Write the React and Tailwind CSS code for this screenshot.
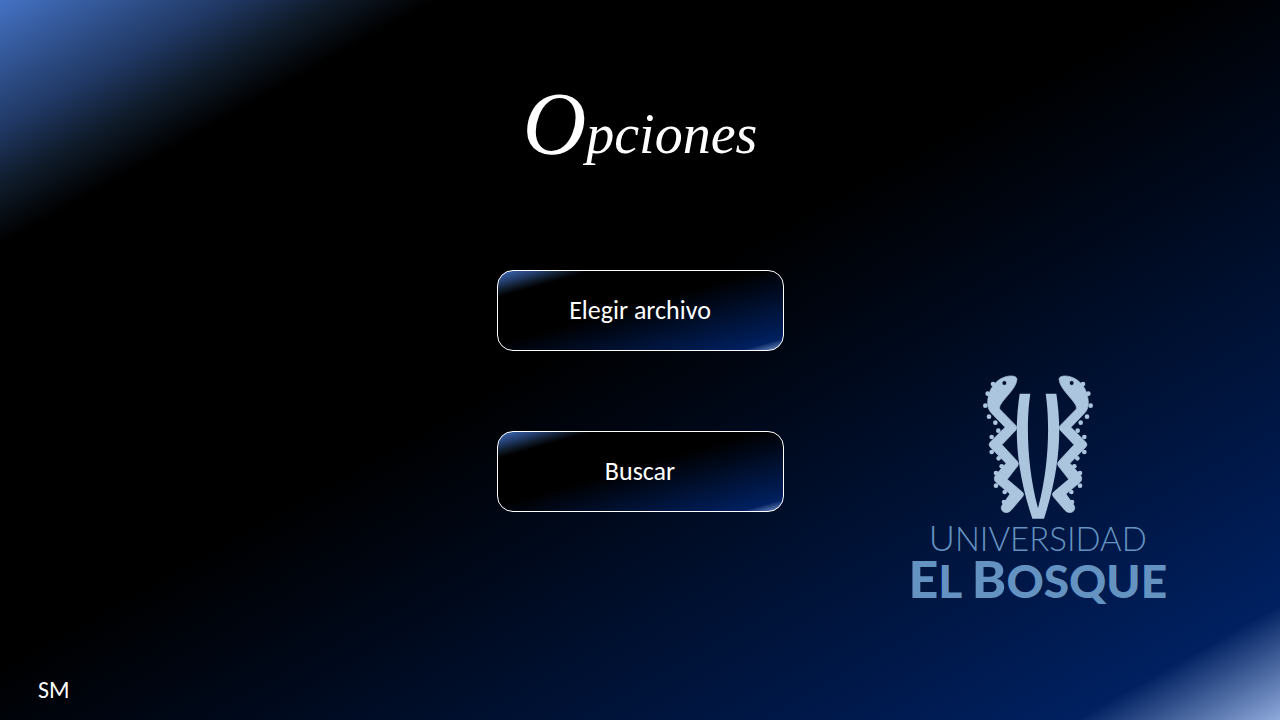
const gradient =
  "bg-[linear-gradient(to_bottom_right,#4472c4_0%,#203864_9%,#0f1b2a_13%,#000000_17%,#000000_46%,#002060_92%,#8faadc_100%)]";

const scales = [
  [99, 57], [83, 86], [76, 122], [87, 155], [106, 173], [115, 197], [95, 216],
  [95, 261], [116, 280], [125, 304], [108, 324], [108, 362], [134, 381], [132, 411],
];

function Serpent() {
  return (
    <>
      <path
        className="stroke-[#abc5de] stroke-2"
        fillRule="evenodd"
        d="M171 43C171 30 143 29 121 42C96 57 82 86 83 117C84 131 88 138 96 146L135 187L91 231Q83 239 91 247L138 295L107 330Q98 342 108 352L150 387L128 418C117 432 129 446 144 442Q150 440 154 435L188 395Q194 387 187 381L142 343L173 303Q178 296 172 289L126 239L168 195Q173 188 168 182L119 132Q118 125 121 120C134 97 168 72 171 43ZM140 54A7 7 0 1 0 126 54A7 7 0 1 0 140 54Z"
      />
      {scales.map(([x, y]) => (
        <circle key={`${x}-${y}`} cx={x} cy={y} r="7" />
      ))}
    </>
  );
}

function Emblem() {
  return (
    <svg viewBox="66 27 336 438" className="h-[146px] w-28 fill-[#abc5de]" aria-hidden="true">
      <Serpent />
      <g transform="translate(468 0) scale(-1 1)">
        <Serpent />
      </g>
      <path d="M179 86H211C199 165 199 300 234 430C269 300 269 165 257 86H289C304 185 304 300 252 461H217C164 300 164 185 179 86Z" />
    </svg>
  );
}

function OptionButton({ children }) {
  return (
    <button
      type="button"
      className={`h-[81px] w-full cursor-pointer rounded-2xl border border-white bg-origin-border text-[26px] ${gradient}`}
    >
      {children}
    </button>
  );
}

export default function App() {
  return (
    <main
      className={`grid min-h-screen grid-cols-[1fr_287px_1fr] font-[Carlito,Lato,sans-serif] text-white ${gradient}`}
    >
      <p className="self-end pb-4 pl-[38px] text-2xl leading-7">SM</p>

      <div className="flex flex-col items-center pt-20">
        <h1 className="h-[190px] font-['Liberation_Serif',serif] text-[56px] leading-[88px] whitespace-nowrap italic first-letter:text-[88px]">
          Opciones
        </h1>
        <div className="flex w-full flex-col gap-20">
          <OptionButton>Elegir archivo</OptionButton>
          <OptionButton>Buscar</OptionButton>
        </div>
      </div>

      <div className="flex flex-col items-center self-end pb-[116px] pl-3 whitespace-nowrap text-[#6493c1]">
        <Emblem />
        <p className="font-[Lato,sans-serif] text-[33px] leading-[34px] font-light first-letter:text-[36px]">
          UNIVERSIDAD
        </p>
        <p className="font-[Lato,sans-serif] text-[46px] leading-[46px] font-black">
          <span className="text-[52px]">E</span>L <span className="text-[52px]">B</span>OSQUE
        </p>
      </div>
    </main>
  );
}
